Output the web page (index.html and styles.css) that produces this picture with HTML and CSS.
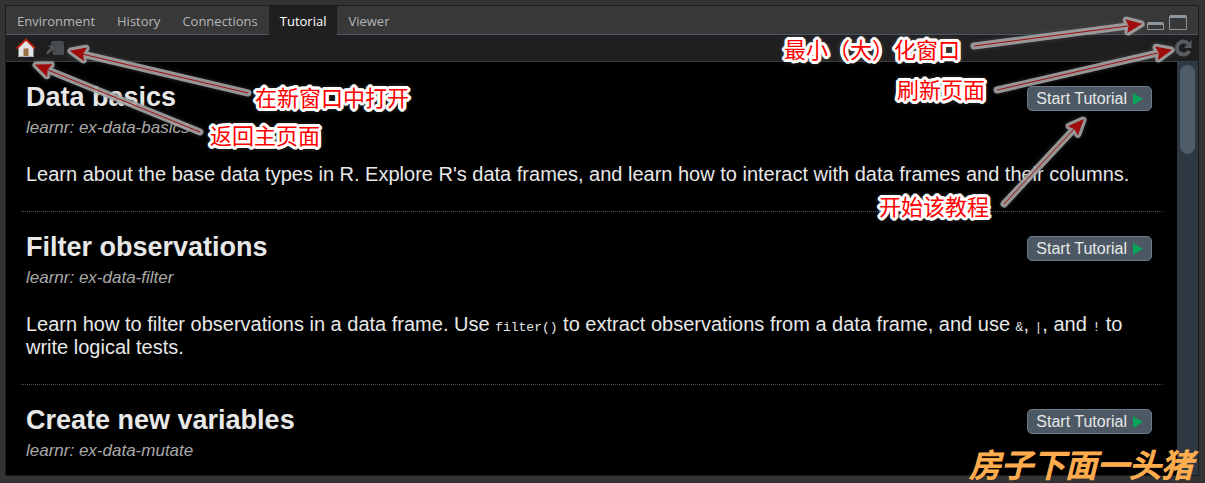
FILE: index.html
```html
<!DOCTYPE html>
<html lang="zh-CN">
<head>
<meta charset="utf-8">
<title>Tutorial</title>
<link rel="stylesheet" href="styles.css">
</head>
<body>
<main class="panel">
  <header class="tabbar">
    <nav class="tabs" aria-label="Panes">
      <button class="tab" type="button">Environment</button>
      <button class="tab" type="button">History</button>
      <button class="tab" type="button">Connections</button>
      <button class="tab tab-active" type="button">Tutorial</button>
      <button class="tab" type="button">Viewer</button>
    </nav>
    <div class="window-controls">
      <button class="icon-button" type="button" aria-label="Minimize">
        <svg width="17" height="16" viewBox="0 0 17 16"><path d="M.5 15.500V9.500q0-1 1-1h14q1 0 1 1v6z" fill="none" stroke="#8d969c"/><path d="M1 8h15v3H1z" fill="#8d969c"/></svg>
      </button>
      <button class="icon-button" type="button" aria-label="Maximize">
        <svg width="18" height="16" viewBox="0 0 18 16"><path d="M.5 15.500V2.500q0-1 1-1h15q1 0 1 1v13z" fill="none" stroke="#8d969c"/><path d="M1 1h16v3H1z" fill="#8d969c"/></svg>
      </button>
    </div>
  </header>
  <div class="toolbar">
    <div class="tools">
      <button class="icon-button" type="button" aria-label="Home">
        <svg width="20" height="20" viewBox="0 0 20 20">
          <path d="M2.500 9 10 2l7.500 7v9.500h-15z" fill="#e2e4e8"/>
          <path d="M2 18.500h16" stroke="#a8b4c2"/>
          <path d="M7.500 10.500h5V18h-5z" fill="#9a7142"/>
          <path d="M.8 10.500 10 1.500l9.200 9" fill="none" stroke="#bd2410" stroke-width="1.800"/>
        </svg>
      </button>
      <button class="icon-button" type="button" aria-label="Open in new window">
        <svg width="19" height="15" viewBox="0 0 19 15">
          <path d="M5 3q0-3 3-3h7q3 0 3 3v11H7z" fill="#4c4f52"/>
          <path d="M6 3.500h12" stroke="#3c4852"/>
          <path d="M1 12.500 6 7.500" stroke="#1f1f1f" stroke-width="4"/>
          <path d="M1 12.500 6 7.500" stroke="#565a5c" stroke-width="2.500"/>
          <path d="M2 4.500h6.500V11z" fill="#565a5c" stroke="#303234" stroke-width=".6"/>
        </svg>
      </button>
    </div>
    <button class="icon-button" type="button" aria-label="Refresh">
      <svg width="18" height="18" viewBox="0 0 18 18"><path d="M14 4.500A6.500 6.500 0 1 0 15.200 12" fill="none" stroke="#595d60" stroke-width="4"/><path d="M17.500 1v8H10z" fill="#595d60"/></svg>
    </button>
  </div>
  <div class="viewport">
    <div class="tutorials">
      <section class="tutorial">
        <div class="tutorial-head">
          <h2>Data basics</h2>
          <button class="start" type="button">Start Tutorial<svg width="10" height="12" viewBox="0 0 10 12"><path d="M0 0 10 6 0 12z" fill="#08a457"/></svg></button>
        </div>
        <div class="source">learnr: ex-data-basics</div>
        <p>Learn about the base data types in R. Explore R's data frames, and learn how to interact with data frames and their columns.</p>
      </section>
      <section class="tutorial">
        <div class="tutorial-head">
          <h2>Filter observations</h2>
          <button class="start" type="button">Start Tutorial<svg width="10" height="12" viewBox="0 0 10 12"><path d="M0 0 10 6 0 12z" fill="#08a457"/></svg></button>
        </div>
        <div class="source">learnr: ex-data-filter</div>
        <p>Learn how to filter observations in a data frame. Use <code>filter()</code> to extract observations from a data frame, and use <code>&amp;</code>, <code>|</code>, and <code>!</code> to write logical tests.</p>
      </section>
      <section class="tutorial">
        <div class="tutorial-head">
          <h2>Create new variables</h2>
          <button class="start" type="button">Start Tutorial<svg width="10" height="12" viewBox="0 0 10 12"><path d="M0 0 10 6 0 12z" fill="#08a457"/></svg></button>
        </div>
        <div class="source">learnr: ex-data-mutate</div>
      </section>
    </div>
    <div class="scroll-track"><div class="scroll-thumb"></div></div>
  </div>
</main>

<svg class="arrows" width="1205" height="483" viewBox="0 0 1205 483" aria-hidden="true">
  <defs>
    <path id="shafts" d="M248 93 82 54M200 132 48 70M974 46 1128 26M997 90 1158 53M1004 204 1074 129"/>
    <path id="head" d="M0 0-14-6-12 0-14 6z"/>
    <g id="heads">
      <use href="#head" transform="translate(71 51) rotate(13)  scale(-1 1)"/>
      <use href="#head" transform="translate(36 65) rotate(22)  scale(-1 1)"/>
      <use href="#head" transform="translate(1141 24) rotate(-8)"/>
      <use href="#head" transform="translate(1171 50) rotate(-13)"/>
      <use href="#head" transform="translate(1083 120) rotate(-47)"/>
    </g>
  </defs>
  <g class="arrow-halo"><use href="#shafts" class="halo-shaft"/><use href="#heads" class="halo-head"/></g>
  <g class="arrow-core"><use href="#shafts"/><use href="#heads"/></g>
</svg>
<span class="note note-open">在新窗口中打开</span>
<span class="note note-home">返回主页面</span>
<span class="note note-size">最小（大）化窗口</span>
<span class="note note-refresh">刷新页面</span>
<span class="note note-start">开始该教程</span>
<span class="signature">房子下面一头猪</span>
</body>
</html>
```
FILE: styles.css
```css
* { box-sizing: border-box; }
body {
  position: relative;
  display: flex;
  height: 100vh;
  margin: 0;
  padding: 5px 6px 7px 5px;
  overflow: hidden;
  background: #333;
  color: #e8e8e8;
  font-family: "Liberation Sans", Arial, sans-serif;
}
button { margin: 0; border: 0; font: inherit; color: inherit; background: none; }
svg { display: block; }
.panel {
  flex: 1;
  min-width: 0;
  display: flex;
  flex-direction: column;
  border: 1px solid #1c1c1c;
  background: #000;
}
.tabbar {
  display: flex;
  justify-content: space-between;
  height: 29px;
  background: #383838;
  border-bottom: 1px solid #48566a;
}
.tabs { display: flex; height: 29px; font: 13px "Open Sans", "Noto Sans", sans-serif; }
.tab { padding: 0 11px; color: #b4b7ba; line-height: 26px; }
.tab-active { color: #fff; background: #1f1f1f; }
.window-controls { display: flex; align-items: flex-start; gap: 5px; padding: 8px 11px 0 0; }
.icon-button { padding: 0; }
.toolbar {
  display: flex;
  align-items: center;
  justify-content: space-between;
  height: 27px;
  padding: 0 6px 0 10px;
  background: #1f1f1f;
  border-bottom: 1px solid #3b3e40;
}
.tools { display: flex; align-items: center; gap: 10px; }
.viewport { flex: 1; min-height: 0; display: flex; overflow: hidden; }
.tutorials { flex: 1; min-width: 0; padding: 0 15px; }
.tutorial { padding: 19px 10px 25px 5px; border-bottom: 1px dotted #48566a; }
.tutorial:last-child { padding-bottom: 0; border-bottom: 0; }
.tutorial-head { display: flex; justify-content: space-between; align-items: flex-start; }
h2 { margin: 0; font-size: 27px; line-height: 32px; }
.start {
  display: flex;
  align-items: center;
  gap: 6px;
  height: 25px;
  margin-top: 5px;
  padding: 0 8px;
  border: 1px solid #6c7b87;
  border-radius: 5px;
  background: #4c5964;
  font-size: 16px;
  line-height: 22px;
}
.source { margin-top: 5px; font-size: 17px; line-height: 20px; font-style: italic; color: #aaa; }
p { margin: 25px 0 0; font-size: 20px; line-height: 23px; }
code { font: 13px "Liberation Mono", monospace; }
.scroll-track { width: 21px; padding: 3px; background: #2d3842; }
.scroll-thumb { height: 89px; border-radius: 8px; background: #4e5c67; }

.arrows {
  position: absolute;
  left: 0;
  top: 0;
  filter: drop-shadow(0 0 2px #6668);
}
.arrow-halo {
  fill: #aaa;
  stroke: #aaa;
  stroke-linecap: round;
  stroke-linejoin: round;
  opacity: .85;
}
.halo-shaft { stroke-width: 7px; }
.halo-head { stroke-width: 7px; }
.arrow-core { fill: #a00c0c; stroke: #a00c0c; stroke-width: 1px; }
.note {
  position: absolute;
  color: #f00;
  font: 400 22px/28px "Noto Sans CJK SC", sans-serif;
  white-space: nowrap;
  text-shadow:
    3px 0 #fff, -3px 0 #fff, 0 3px #fff, 0 -3px #fff,
    2px 2px #fff, -2px 2px #fff, 2px -2px #fff, -2px -2px #fff,
    1px 3px #fff, -1px 3px #fff, 1px -3px #fff, -1px -3px #fff,
    3px 1px #fff, -3px 1px #fff, 3px -1px #fff, -3px -1px #fff,
    1px 1px #fff, -1px -1px #fff, 1px -1px #fff, -1px 1px #fff,
    0 0 6px #fff;
}
.note-open { left: 255px; top: 82px; }
.note-home { left: 210px; top: 120px; }
.note-size { left: 784px; top: 34px; }
.note-refresh { left: 897px; top: 74px; }
.note-start { left: 879px; top: 191px; }
.signature {
  position: absolute;
  right: 12px;
  bottom: 2px;
  color: #ffad4f;
  font: italic 500 32px/36px "Noto Sans CJK SC", sans-serif;
  -webkit-text-stroke: 1px #ffad4f;
  white-space: nowrap;
}
```
